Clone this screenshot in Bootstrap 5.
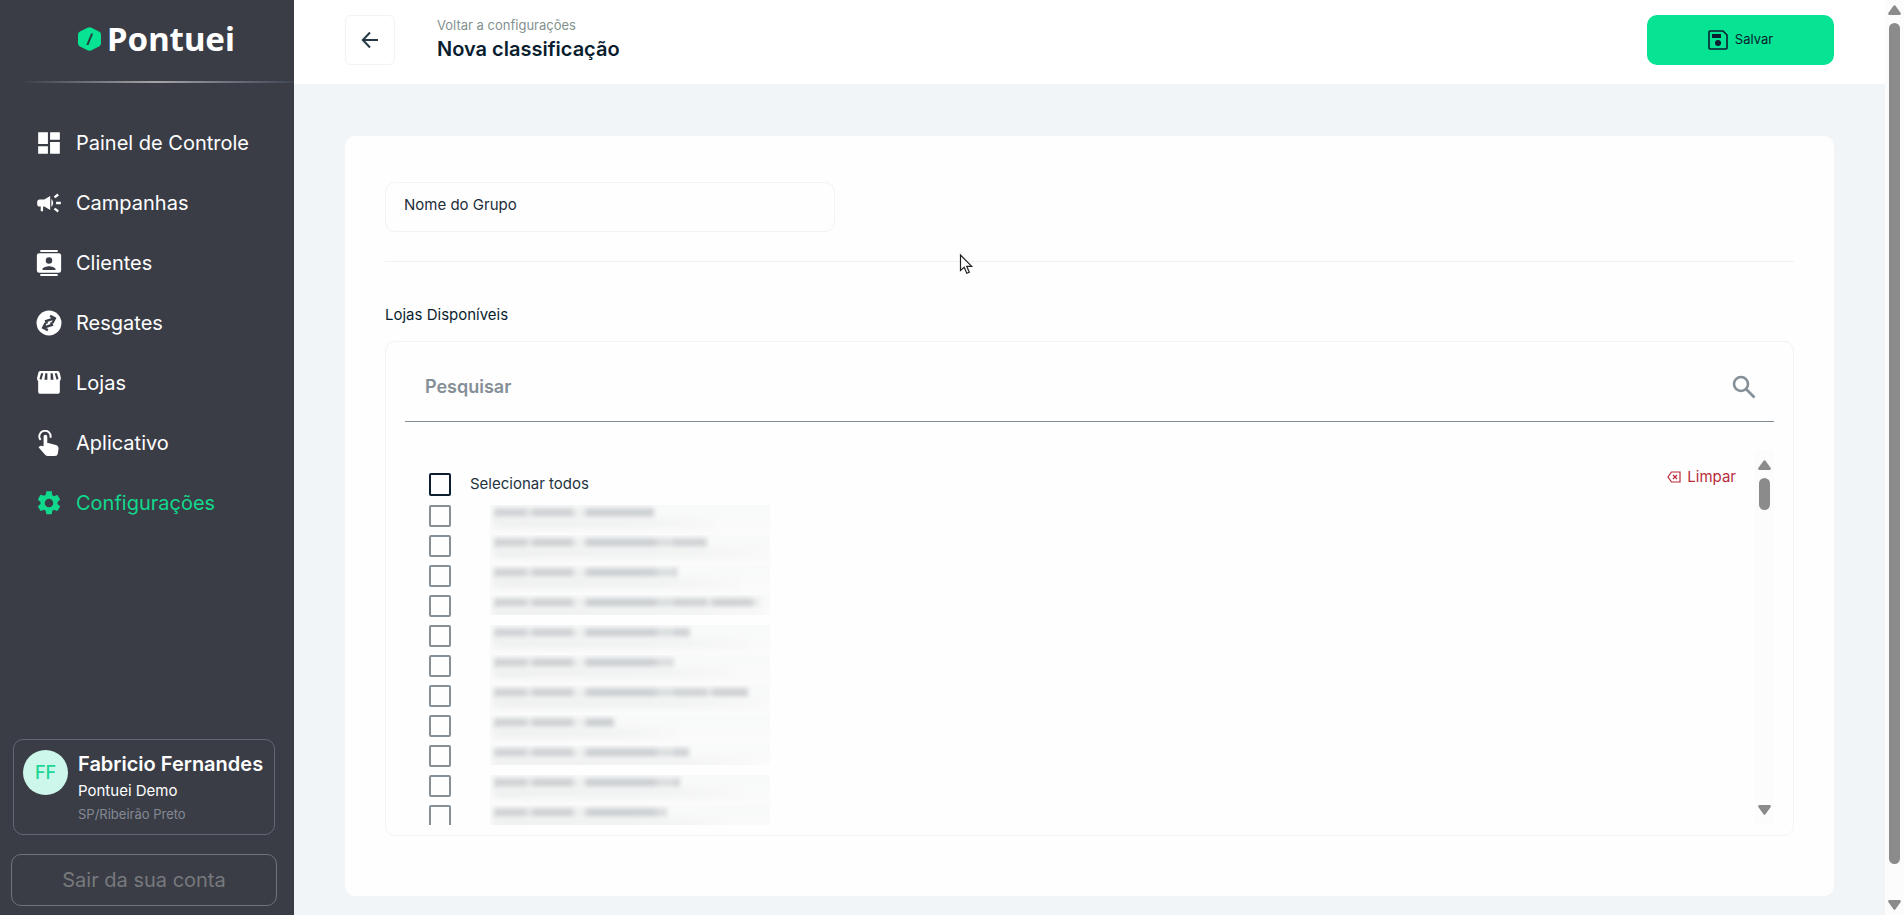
<!DOCTYPE html>
<html lang="pt-BR">
<head>
<meta charset="utf-8">
<meta name="viewport" content="width=device-width, initial-scale=1">
<title>Pontuei - Nova classificação</title>
<link href="https://cdn.jsdelivr.net/npm/bootstrap@5.3.0/dist/css/bootstrap.min.css" rel="stylesheet">
<style>
body{font-family:Inter,"Liberation Sans",sans-serif;background:#f1f5f8;color:#0a1e2f;font-size:15px;line-height:20px}
.side{width:294px;background:#3a3d46}
.brand-row{height:81px;padding:0 0 4px 19px;gap:6px}
.brand-name{font-family:"Noto Sans","Liberation Sans",sans-serif;font-weight:700;font-size:33px;line-height:40px;color:#fff}
.side-rule{height:2px;margin-left:20px;background:linear-gradient(90deg,#3a3d46,#a5a5a8 50%,#3f4656)}
.side-nav{padding-top:30px}
.side-link{height:60px;padding-left:36px;gap:14px;color:#fff;font-size:20px;line-height:24px;text-decoration:none}
.side-link.active{color:#10d98d}
.side-link svg{width:26px;height:26px;fill:currentColor;flex:none}
.user-box{margin:0 19px 19px 13px;border:1px solid #626775;border-radius:10px;padding:10px 9px;height:96px;gap:10px}
.avatar{width:45px;height:45px;background:#cdf7ea;color:#1bd896;font-size:18px;font-weight:500}
.user-name{font-size:20px;line-height:28px;font-weight:600;color:#fff}
.user-shop{font-size:15px;line-height:26px;color:#fff}
.user-city{font-size:13px;line-height:20px;color:#858994}
.exit-btn{height:52px;margin:0 17px 9px 11px;border:1px solid #717378;border-radius:10px;color:#77797d;font-size:20px;line-height:24px}
.top{height:84px;background:#fff;padding:15px 51px 19px}
.back{width:50px;height:50px;border:1px solid #f0f2f3;border-radius:6px;margin-right:42px}
.crumb{font-size:13px;line-height:20px;color:#83918f;text-decoration:none}
.page-title{font-size:20px;line-height:28px;font-weight:600;margin:0}
.save{width:187px;height:50px;background:#06e392;border-radius:10px;font-size:13px;color:#0a1e2f;gap:7px}
.panel-area{padding:52px 51px 19px}
.panel{background:#fefefe;border-radius:10px;padding:46px 40px 60px}
.group-in{width:450px;height:50px;border:1px solid #f1f3f4;border-radius:10px;padding:0 18px 6px;background:#fefefe;font-size:15px}
.group-in::placeholder{color:#1c2c3a;opacity:1}
.rule{margin:29px 0 43px;border-top:1px solid #eff1f2}
.stores{border:1px solid #f1f3f4;border-radius:10px;margin-top:16px;padding:0 19px 10px}
.find{height:80px;border-bottom:1px solid #838d96;padding:11px 18px 0 20px}
.find input{border:0;outline:0;background:none;font-size:18px;line-height:24px;font-weight:600}
.find input::placeholder{color:#858f97;opacity:1}
.list-area{height:375px;margin-top:28px}
.list-rows{padding:23px 0 0 24px;overflow:clip;overflow-clip-margin:0}
.row-item{height:30px}
.row-item:first-child{height:32px}
.box{appearance:none;width:22px;height:22px;margin:0;border:2px solid #858f97;border-radius:2px;background:#fefefe;flex:none}
.box.all{border-color:#0a1e2f;height:23px}
.all-label{margin-left:19px;padding-top:1px;color:#24343f}
.smear{width:280px;height:30px;margin-left:39px;overflow:hidden;background:linear-gradient(#f8f9f9,#fbfbfb)}
.smear.gap-under{height:20px}
.smear i{display:block;height:10px;margin:3px 0 0 4px;filter:blur(2px);background:repeating-linear-gradient(90deg,#d2d5d7 0 31px,#e3e5e6 34px 37px,#d0d3d5 40px 77px,#eeefef 82px 89px,#ced1d4 94px 160px,#dcdfe0 165px 180px)}
.smear b{display:block;height:10px;margin-left:4px;filter:blur(3px);background:linear-gradient(90deg,#eeefef,#f1f2f2 70%,#f8f8f8)}
.clear{padding:0;margin:17px 19px 0 0;color:#b82b3a;font-size:15px;line-height:20px;gap:6px}
.track{width:19px;background:#fcfcfc;padding:5px 0}
.thumb{width:11px;background:#8b8b8b;border-radius:6px}
.page-thumb{margin-bottom:36px}
.list-thumb{height:32px}
.tri{width:13px;height:10px;fill:#8b8b8b;flex:none}
.inner-track{padding:10px 0}
.pointer{left:959px;top:253px;width:15px;height:23px}
</style>
</head>
<body>
<div class="d-flex vh-100 overflow-hidden">
<aside class="side d-flex flex-column flex-shrink-0">
  <div class="brand-row d-flex justify-content-center align-items-center">
    <svg width="23" height="24" viewBox="0 0 23 24" aria-hidden="true"><path d="M9.5.8q2-1 4 0l7.500 3.800q2 1 2 3v8.800q0 2-2 3l-7.500 3.800q-2 1-4 0L2 19.400q-2-1-2-3V7.600q0-2 2-3z" fill="#06e392"/><path d="M13 6.500h2.200L10.500 18H8.300z" fill="#24433f"/></svg>
    <span class="brand-name">Pontuei</span>
  </div>
  <div class="side-rule"></div>
  <nav class="side-nav d-flex flex-column">
    <a href="#" class="side-link d-flex align-items-center"><svg viewBox="0 0 24 24"><path d="M2 2h9v11H2zM13 2h9v7h-9zM2 15h9v7H2zM13 11h9v11h-9z"/></svg>Painel de Controle</a>
    <a href="#" class="side-link d-flex align-items-center"><svg viewBox="1 1 22 22"><path d="M18 11v2h4v-2zm-2 6.600c1 .7 2.200 1.600 3.200 2.400l1.200-1.600c-1-.8-2.200-1.700-3.200-2.400zM20.400 5.600 19.200 4c-1 .8-2.200 1.700-3.200 2.400L17.200 8c1-.7 2.200-1.600 3.200-2.400zM4 9c-1.100 0-2 .9-2 2v2c0 1.100.9 2 2 2h1v4h2v-4h1l5 3V6L8 9zm11.500 3c0-1.300-.6-2.500-1.500-3.400v6.700c.9-.8 1.500-2 1.500-3.300z"/></svg>Campanhas</a>
    <a href="#" class="side-link d-flex align-items-center"><svg viewBox="0 0 24 24"><path fill-rule="evenodd" d="M20 0H4v1.800h16zM4 24h16v-1.800H4zM21 3H3Q.8 3 .8 5v14q0 2 2.200 2h18q2.200 0 2.200-2V5q0-2-2.200-2zM12 6.800a3 3 0 1 1 0 6 3 3 0 0 1 0-6zM18 18.500H6V17.600c0-1.800 4-2.700 6-2.700s6 .9 6 2.700z"/></svg>Clientes</a>
    <a href="#" class="side-link d-flex align-items-center"><svg viewBox="0 0 24 24"><circle cx="12" cy="12" r="11.500"/><g fill="none" stroke="#3a3d46" stroke-width="2.200" transform="rotate(-18 12 12)"><path d="M10 12V9.500h8M15 6l3.500 3.500L15 13M14 12v2.500H6M9 11l-3.500 3.500L9 18"/></g></svg>Resgates</a>
    <a href="#" class="side-link d-flex align-items-center"><svg viewBox="0 0 24 24"><path d="m22.900 7-1-4.200C21.700 1.800 20.900 1 20 1H4c-.9 0-1.700.8-1.900 1.800L1.100 7c-.3 1.200 0 2.400.9 3.300V20c0 1.100.9 2 2 2h16c1.100 0 2-.9 2-2v-9.700c.8-.9 1.100-2.100.9-3.300zM5 9l-1.800-.6L4.700 3h2zm5.500 0H7.800l.8-6h1.900zm5.700 0h-2.700V3h1.900zm4.600-.6L19 9l-1.700-6h2z"/></svg>Lojas</a>
    <a href="#" class="side-link d-flex align-items-center"><svg viewBox="0 0 24 24"><path d="M4.300 9.200a5.200 5.200 0 1 1 9-2" fill="none" stroke="currentColor" stroke-width="1.800"/><path d="M7 6a1.700 1.700 0 0 1 3.400 0v6h1l6.900 1.900q2.700.8 2.500 3.500l-.6 4.200q-.4 2.400-2.800 2.400H11q-1.500 0-2.600-1.100L2.300 16l1.200-1.100q.6-.5 1.400-.4L7 15z"/></svg>Aplicativo</a>
    <a href="#" class="side-link active d-flex align-items-center" aria-current="page"><svg viewBox="1 1 22 22"><path d="M19.140 12.940c.04-.3.060-.61.060-.94s-.02-.64-.07-.94l2.030-1.580a.5.500 0 0 0 .12-.61l-1.920-3.320a.49.490 0 0 0-.59-.22l-2.390.96a7 7 0 0 0-1.620-.94l-.36-2.540A.48.480 0 0 0 13.920 2h-3.840a.47.470 0 0 0-.47.410l-.36 2.540a7.300 7.300 0 0 0-1.620.94l-2.390-.96a.48.480 0 0 0-.59.220L2.740 8.870a.47.470 0 0 0 .12.610l2.030 1.580a6 6 0 0 0-.02 1.880l-2.030 1.580a.5.500 0 0 0-.12.610l1.920 3.320c.12.220.37.290.59.220l2.390-.96c.5.380 1.030.7 1.620.94l.36 2.540c.05.240.24.410.48.410h3.840c.24 0 .44-.17.470-.41l.36-2.540a7 7 0 0 0 1.620-.94l2.390.96c.22.080.47 0 .59-.22l1.920-3.320a.47.470 0 0 0-.12-.61zM12 15.600a3.600 3.600 0 1 1 0-7.200 3.600 3.600 0 0 1 0 7.200z"/></svg>Configurações</a>
  </nav>
  <div class="user-box d-flex mt-auto">
    <div class="avatar rounded-circle d-flex align-items-center justify-content-center flex-shrink-0">FF</div>
    <div class="text-nowrap"><div class="user-name">Fabricio Fernandes</div><div class="user-shop">Pontuei Demo</div><div class="user-city">SP/Ribeirão Preto</div></div>
  </div>
  <button type="button" class="btn exit-btn">Sair da sua conta</button>
</aside>
<div class="flex-grow-1 d-flex flex-column">
  <header class="top d-flex">
    <button type="button" class="btn back p-0 d-flex align-items-center justify-content-center" aria-label="Voltar"><svg width="18" height="18" viewBox="0 0 18 18" fill="none" stroke="#263844" stroke-width="2"><path d="M17 9H2M9 1.500 1.800 9 9 16.500"/></svg></button>
    <div class="flex-grow-1"><a href="#" class="crumb d-block">Voltar a configurações</a><h1 class="page-title">Nova classificação</h1></div>
    <button type="button" class="btn save p-0 d-flex align-items-center justify-content-center"><svg width="20" height="20" viewBox="0 0 20 20"><path d="M1 2q0-1 1-1h13l4 4v13q0 1-1 1H2q-1 0-1-1z" fill="none" stroke="#0a1e2f" stroke-width="1.600"/><path d="M4 4h9v4H4z" fill="#0a1e2f"/><circle cx="10" cy="13" r="3" fill="#0a1e2f"/></svg>Salvar</button>
  </header>
  <main class="panel-area">
    <div class="panel">
      <input class="group-in d-block" type="text" placeholder="Nome do Grupo" aria-label="Nome do Grupo">
      <div class="rule"></div>
      <div>Lojas Disponíveis</div>
      <section class="stores">
        <div class="find d-flex align-items-center">
          <input class="flex-grow-1 p-0" type="text" placeholder="Pesquisar" aria-label="Pesquisar">
          <svg width="24" height="24" viewBox="0 0 24 24" fill="none" stroke="#858f97" stroke-width="2.600"><circle cx="9" cy="9" r="7"/><path d="m14 14 8.500 8.500"/></svg>
        </div>
        <div class="list-area d-flex">
          <div class="list-rows flex-grow-1" id="rows">
            <div class="row-item d-flex align-items-start"><input class="box all" type="checkbox" id="all"><label class="all-label" for="all">Selecionar todos</label></div>
          </div>
          <button type="button" class="btn clear d-flex align-items-center align-self-start border-0"><svg width="14" height="12" viewBox="0 0 14 12" fill="none" stroke="currentColor" stroke-width="1.200"><path d="M4.500 1H13v10H4.500L1 6zM6 4l4 4M10 4 6 8"/></svg>Limpar</button>
          <div class="track inner-track d-flex flex-column align-items-center flex-shrink-0" aria-hidden="true">
            <svg class="tri" viewBox="0 0 13 10"><path d="M5.500.8q1-1 2 0L12.700 8q.5 2-1.200 2h-10Q-.2 10 .3 8z"/></svg>
            <div class="thumb list-thumb mt-2"></div>
            <svg class="tri mt-auto" viewBox="0 0 13 10"><path d="M5.500 9.200q1 1 2 0L12.700 2q.5-2-1.200-2h-10Q-.2 0 .3 2z"/></svg>
          </div>
        </div>
      </section>
    </div>
  </main>
</div>
<div class="track d-flex flex-column align-items-center flex-shrink-0" aria-hidden="true">
  <svg class="tri" viewBox="0 0 13 10"><path d="M5.500.8q1-1 2 0L12.700 8q.5 2-1.200 2h-10Q-.2 10 .3 8z"/></svg>
  <div class="thumb page-thumb flex-grow-1 mt-2"></div>
  <svg class="tri" viewBox="0 0 13 10"><path d="M5.500 9.200q1 1 2 0L12.700 2q.5-2-1.200-2h-10Q-.2 0 .3 2z"/></svg>
</div>
</div>
<svg class="pointer position-absolute" viewBox="0 0 15 23" aria-hidden="true"><path d="M1.500 2v15.500l3.700-3.300 2.600 6 2.500-1-2.600-5.900h5z" fill="#fff" stroke="#222" stroke-width="1.200"/></svg>
<script src="https://cdn.jsdelivr.net/npm/bootstrap@5.3.0/dist/js/bootstrap.bundle.min.js"></script>
<script>
// Store rows: width of each obscured name
const widths=[160,213,183,267,196,180,254,120,195,186,173];
const rows=document.getElementById('rows');
widths.forEach((w,i)=>{
  const extra=(i===3||i===8)?' gap-under':'';
  rows.insertAdjacentHTML('beforeend',`<div class="row-item d-flex align-items-start"><input class="box" type="checkbox" aria-label="Loja ${i+1}"><div class="smear${extra}"><i style="width:${w}px"></i><b style="width:${Math.min(w+60,270)}px"></b></div></div>`);
});
</script>
</body>
</html>
